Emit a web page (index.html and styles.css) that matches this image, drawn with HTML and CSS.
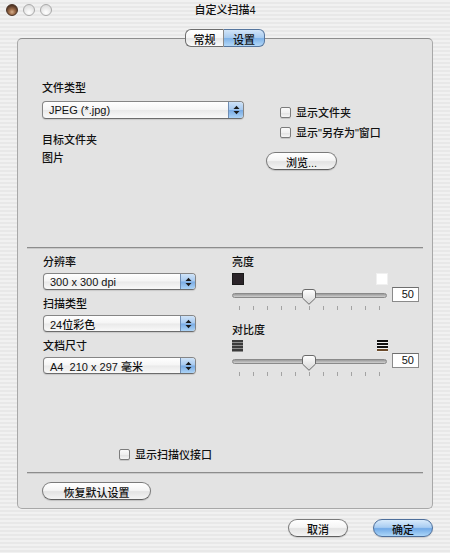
FILE: index.html
```html
<!DOCTYPE html>
<html lang="zh-CN">
<head>
<meta charset="utf-8">
<title>自定义扫描4</title>
<link rel="stylesheet" href="styles.css">
</head>
<body>
<div class="window">
  <div class="titlebar">
    <div class="lights">
      <span class="light light-close"></span>
      <span class="light"></span>
      <span class="light"></span>
    </div>
    <div class="title">自定义扫描4</div>
    <div class="title-spacer"></div>
  </div>

  <div class="group">
    <div class="tabs">
      <span class="tab tab-first">常规</span>
      <span class="tab tab-sel">设置</span>
    </div>

    <div class="sec-top">
      <div class="col-file">
        <div class="label lbl-type">文件类型</div>
        <div class="popup popup-file">
          <span class="popup-text">JPEG (*.jpg)</span>
          <span class="popup-arrows"><svg width="7" height="10" viewBox="0 0 7 10"><polygon points="0.5,4 3.5,0.8 6.5,4" fill="#1a1a1a"/><polygon points="0.5,6 3.5,9.2 6.5,6" fill="#1a1a1a"/></svg></span>
        </div>
        <div class="label lbl-dest">目标文件夹</div>
        <div class="label lbl-pic">图片</div>
      </div>
      <div class="col-opts">
        <div class="check check-1"><span class="box"></span><span>显示文件夹</span></div>
        <div class="check check-2"><span class="box"></span><span>显示&quot;另存为&quot;窗口</span></div>
        <div class="btn btn-browse">浏览...</div>
      </div>
    </div>

    <div class="divider"></div>

    <div class="sec-mid">
      <div class="col-scan">
        <div class="label lbl-res">分辨率</div>
        <div class="popup popup-mid">
          <span class="popup-text">300 x 300 dpi</span>
          <span class="popup-arrows"><svg width="7" height="10" viewBox="0 0 7 10"><polygon points="0.5,4 3.5,0.8 6.5,4" fill="#1a1a1a"/><polygon points="0.5,6 3.5,9.2 6.5,6" fill="#1a1a1a"/></svg></span>
        </div>
        <div class="label lbl-next">扫描类型</div>
        <div class="popup popup-mid">
          <span class="popup-text">24位彩色</span>
          <span class="popup-arrows"><svg width="7" height="10" viewBox="0 0 7 10"><polygon points="0.5,4 3.5,0.8 6.5,4" fill="#1a1a1a"/><polygon points="0.5,6 3.5,9.2 6.5,6" fill="#1a1a1a"/></svg></span>
        </div>
        <div class="label lbl-next">文档尺寸</div>
        <div class="popup popup-mid">
          <span class="popup-text">A4&nbsp; 210 x 297 毫米</span>
          <span class="popup-arrows"><svg width="7" height="10" viewBox="0 0 7 10"><polygon points="0.5,4 3.5,0.8 6.5,4" fill="#1a1a1a"/><polygon points="0.5,6 3.5,9.2 6.5,6" fill="#1a1a1a"/></svg></span>
        </div>
      </div>

      <div class="col-adjust">
        <div class="label lbl-bright">亮度</div>
        <div class="icon-row">
          <span class="sq sq-dark"></span>
          <span class="sq sq-light"></span>
        </div>
        <div class="slider-row">
          <div class="slider">
            <div class="track"></div>
            <svg class="thumb" width="14" height="16" viewBox="0 0 14 16"><defs><linearGradient id="tg1" x1="0" y1="0" x2="0" y2="1"><stop offset="0" stop-color="#ffffff"/><stop offset="1" stop-color="#d6d6d6"/></linearGradient></defs><path d="M3,0.5 H11 Q13.5,0.5 13.5,3 V9 L7,15.3 L0.5,9 V3 Q0.5,0.5 3,0.5 Z" fill="url(#tg1)" stroke="#6a6a6a" stroke-width="1"/></svg>
            <div class="ticks"><i></i><i></i><i></i><i></i><i></i><i></i><i></i><i></i><i></i><i></i><i></i></div>
          </div>
          <div class="valbox">50</div>
        </div>

        <div class="label lbl-contrast">对比度</div>
        <div class="icon-row icon-row-2">
          <svg width="11" height="12" viewBox="0 0 11 12"><rect x="0" y="0" width="11" height="12" fill="#8c8c8c"/><rect x="0" y="0" width="11" height="2" fill="#3a3a3a"/><rect x="0" y="3" width="11" height="2" fill="#3a3a3a"/><rect x="0" y="6" width="11" height="2" fill="#3a3a3a"/><rect x="0" y="9" width="11" height="2" fill="#3a3a3a"/></svg>
          <svg width="11" height="12" viewBox="0 0 11 12"><rect x="0" y="0" width="11" height="12" fill="#f2f2f2"/><rect x="0" y="0" width="11" height="2" fill="#111"/><rect x="0" y="3" width="11" height="2" fill="#111"/><rect x="0" y="6" width="11" height="2" fill="#111"/><rect x="0" y="9" width="11" height="2" fill="#6b4a2a"/></svg>
        </div>
        <div class="slider-row slider-row-2">
          <div class="slider">
            <div class="track"></div>
            <svg class="thumb" width="14" height="16" viewBox="0 0 14 16"><defs><linearGradient id="tg2" x1="0" y1="0" x2="0" y2="1"><stop offset="0" stop-color="#ffffff"/><stop offset="1" stop-color="#d6d6d6"/></linearGradient></defs><path d="M3,0.5 H11 Q13.5,0.5 13.5,3 V9 L7,15.3 L0.5,9 V3 Q0.5,0.5 3,0.5 Z" fill="url(#tg2)" stroke="#6a6a6a" stroke-width="1"/></svg>
            <div class="ticks"><i></i><i></i><i></i><i></i><i></i><i></i><i></i><i></i><i></i><i></i><i></i></div>
          </div>
          <div class="valbox">50</div>
        </div>
      </div>
    </div>

    <div class="check check-scanner"><span class="box"></span><span>显示扫描仪接口</span></div>

    <div class="divider divider-2"></div>

    <div class="reset-row">
      <div class="btn btn-reset">恢复默认设置</div>
    </div>
  </div>

  <div class="footer">
    <div class="btn btn-foot">取消</div>
    <div class="btn btn-foot btn-default">确定</div>
  </div>
</div>
</body>
</html>
```

FILE: styles.css
```css
* { box-sizing: border-box; }
html, body { margin: 0; padding: 0; }
body {
  width: 450px;
  height: 553px;
  overflow: hidden;
  font-family: "Liberation Sans", "Noto Sans CJK SC", sans-serif;
  font-size: 11px;
  font-weight: 500;
  color: #111;
}
.window {
  width: 450px;
  height: 553px;
  display: flex;
  flex-direction: column;
  background: repeating-linear-gradient(to bottom, #f1f1f1 0px, #f1f1f1 2px, #e8e8e8 2px, #e8e8e8 4px);
}

/* title bar */
.titlebar {
  height: 18px;
  display: grid;
  grid-template-columns: 1fr auto 1fr;
  align-items: center;
}
.lights {
  display: flex;
  gap: 5px;
  padding-left: 6px;
  padding-top: 1px;
}
.light {
  width: 12px;
  height: 12px;
  border-radius: 50%;
  border: 1px solid #a9a9a9;
  background: radial-gradient(circle at 50% 75%, #ffffff 0, #ececec 45%, #d4d4d4 100%);
}
.light-close {
  border-color: #4a3224;
  background: radial-gradient(circle at 50% 70%, #d7b08d 0, #9a6a48 35%, #5a3a28 70%, #3a261a 100%);
}
.title {
  font-size: 11px;
  color: #111;
  line-height: 14px;
  padding-top: 1px;
}

/* group box */
.group {
  position: relative;
  margin: 20px 17px 0 17px;
  width: 416px;
  height: 471px;
  border: 1px solid #a8a8a8;
  border-top-color: #8e8e8e;
  border-radius: 5px;
  background: #e3e3e3;
  display: flex;
  flex-direction: column;
}

.tabs {
  position: absolute;
  top: -10px;
  left: 167px;
  display: flex;
  height: 18px;
}
.tab {
  display: flex;
  align-items: center;
  justify-content: center;
  height: 18px;
  border: 1px solid #6e6e6e;
  font-size: 11px;
  padding-top: 1px;
}
.tab-first {
  width: 39px;
  border-right: 1px solid #8a8a8a;
  border-radius: 6px 0 0 6px;
  background: linear-gradient(#ffffff 0%, #f6f6f6 48%, #e6e6e6 52%, #fbfbfb 100%);
}
.tab-sel {
  width: 41px;
  border-left: none;
  border-radius: 0 6px 6px 0;
  border-color: #56769e;
  background: linear-gradient(#d2e5f8 0%, #a8cbef 48%, #7fb2e7 52%, #b3d8f8 100%);
}

.label {
  height: 14px;
  line-height: 14px;
  white-space: nowrap;
}

/* top section */
.sec-top {
  height: 208px;
  display: flex;
  padding-left: 24px;
}
.col-file {
  width: 202px;
  display: flex;
  flex-direction: column;
}
.lbl-type { margin-top: 42px; }
.popup-file { margin-top: 6px; height: 18px; }
.lbl-dest { margin-top: 14px; }
.lbl-pic { margin-top: 4px; }

.col-opts {
  margin-left: 22px;
  display: flex;
  flex-direction: column;
  align-items: flex-start;
}
.check {
  height: 14px;
  display: flex;
  align-items: center;
  gap: 5px;
  white-space: nowrap;
}
.box {
  width: 11px;
  height: 11px;
  border: 1px solid #7c7c7c;
  border-radius: 2px;
  background: linear-gradient(#fbfbfb 0%, #f0f0f0 50%, #e2e2e2 55%, #f6f6f6 100%);
  box-shadow: 0 1px 0 rgba(0,0,0,0.12);
  flex: none;
}
.check-1 { margin-top: 66px; margin-left: 14px; }
.check-2 { margin-top: 6px; margin-left: 14px; }
.btn-browse { margin-top: 13px; width: 71px; }

/* popups */
.popup {
  display: flex;
  align-items: stretch;
  border: 1px solid #858585;
  border-bottom-color: #6c6c6c;
  border-radius: 4px;
  background: linear-gradient(#ffffff 0%, #f5f5f5 48%, #e9e9e9 52%, #f9f9f9 100%);
  box-shadow: 0 1px 1px rgba(0,0,0,0.12);
  overflow: hidden;
}
.popup-text {
  flex: 1;
  padding-left: 6px;
  display: flex;
  align-items: center;
  white-space: nowrap;
  color: #111;
}
.popup-arrows {
  width: 15px;
  display: flex;
  align-items: center;
  justify-content: center;
  border-left: 1px solid #6f8db3;
  background: linear-gradient(#cfe3f8 0%, #a6c9ef 48%, #79abe4 52%, #acd3f6 100%);
}

.divider {
  margin: 0 9px;
  height: 2px;
  border-top: 1px solid #8d8d8d;
  border-bottom: 1px solid #c9c9c9;
  flex: none;
}

/* middle section */
.sec-mid {
  height: 198px;
  display: flex;
  align-items: flex-start;
  padding-left: 25px;
}
.col-scan {
  width: 153px;
  display: flex;
  flex-direction: column;
}
.lbl-res { margin-top: 6px; }
.popup-mid { margin-top: 4px; height: 17px; }
.lbl-next { margin-top: 7px; }

.col-adjust {
  margin-left: 36px;
  display: flex;
  flex-direction: column;
}
.lbl-bright { margin-top: 6px; }
.icon-row {
  margin-top: 4px;
  width: 156px;
  height: 12px;
  display: flex;
  justify-content: space-between;
}
.sq {
  width: 12px;
  height: 12px;
}
.sq-dark { background: #2b2429; border: 1px solid #1a1a1a; }
.sq-light { background: #ffffff; border: 1px solid #f0f0f0; }

.slider-row {
  margin-top: 2px;
  display: flex;
  align-items: flex-start;
}
.slider {
  position: relative;
  width: 156px;
  height: 23px;
}
.track {
  position: absolute;
  left: 0;
  right: 1px;
  top: 6px;
  height: 5px;
  border-radius: 3px;
  border: 1px solid #8a8a8a;
  background: linear-gradient(#9a9a9a, #cfcfcf);
}
.thumb {
  position: absolute;
  left: 70px;
  top: 2px;
}
.ticks {
  position: absolute;
  left: 7px;
  width: 141px;
  top: 19px;
  height: 4px;
  display: flex;
  justify-content: space-between;
}
.ticks i {
  display: block;
  width: 1px;
  height: 4px;
  background: #a3a3a3;
}
.valbox {
  margin-left: 4px;
  width: 27px;
  height: 15px;
  border: 1px solid #8a8a8a;
  border-top-color: #6e6e6e;
  background: #ffffff;
  text-align: right;
  padding-right: 4px;
  line-height: 13px;
  font-size: 11px;
  color: #111;
}
.lbl-contrast { margin-top: 13px; }
.icon-row-2 { margin-top: 3px; }
.slider-row-2 { margin-top: 1px; }

.check-scanner {
  margin-left: 101px;
}
.divider-2 { margin-top: 11px; }

.reset-row {
  padding-left: 24px;
  margin-top: 8px;
}
.btn-reset { width: 109px; }

/* buttons */
.btn {
  height: 18px;
  display: flex;
  align-items: center;
  justify-content: center;
  border: 1px solid #7a7a7a;
  border-bottom-color: #5e5e5e;
  border-radius: 9px;
  background: linear-gradient(#ffffff 0%, #f5f5f5 46%, #e3e3e3 54%, #f4f4f4 100%);
  box-shadow: 0 1px 1px rgba(0,0,0,0.15);
  white-space: nowrap;
  padding-top: 1px;
}
.footer {
  margin-top: 10px;
  display: flex;
  justify-content: flex-end;
  gap: 25px;
  padding-right: 17px;
}
.btn-foot { width: 60px; }
.btn-default {
  border-color: #4e6f9b;
  background: linear-gradient(#d8eafb 0%, #a9cdf2 46%, #72aae7 54%, #acd6f8 100%);
}
```
